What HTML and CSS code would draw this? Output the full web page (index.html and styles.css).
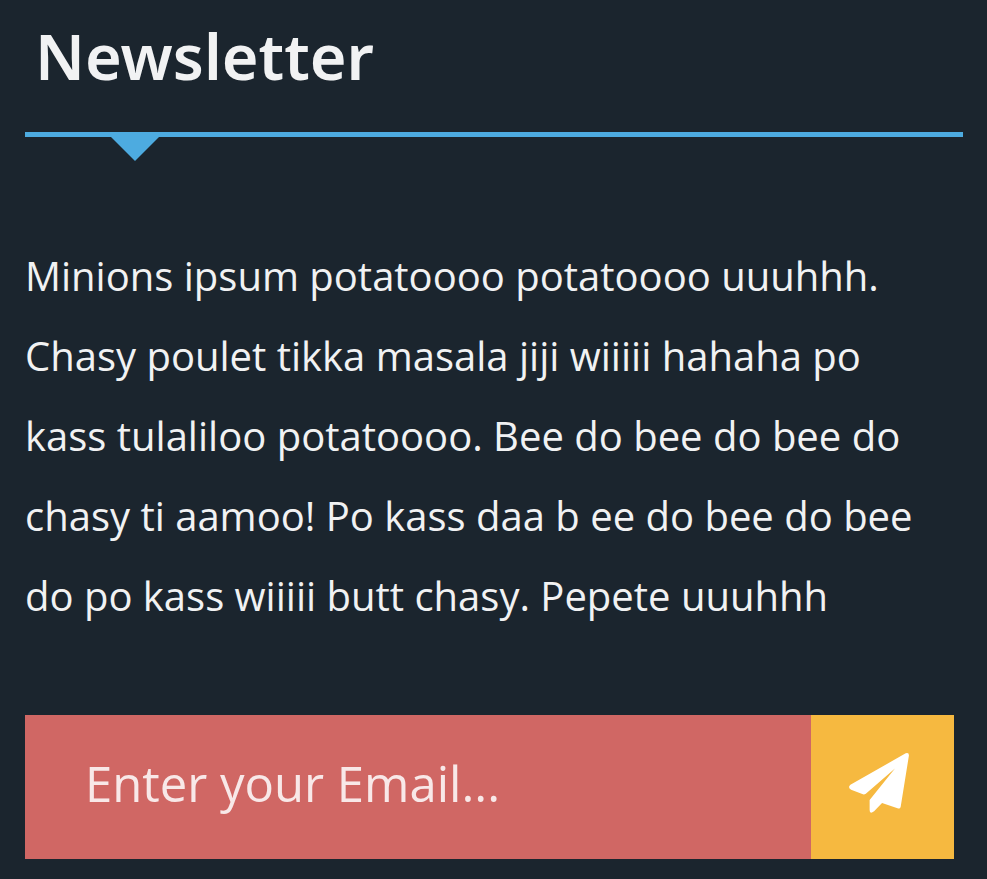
FILE: index.html
```html
<!DOCTYPE html>
<html lang="en">
<head>
<meta charset="utf-8">
<title>Newsletter</title>
<link rel="stylesheet" href="styles.css">
</head>
<body>
<section class="newsletter">
  <h2 class="title">Newsletter</h2>
  <p class="intro">Minions ipsum potatoooo potatoooo uuuhhh.<br>Chasy poulet tikka masala jiji wiiiii hahaha po<br>kass tulaliloo potatoooo. Bee do bee do bee do<br>chasy ti aamoo! Po kass daa b ee do bee do bee<br>do po kass wiiiii butt chasy. Pepete uuuhhh</p>
  <form class="signup">
    <input class="email" type="email" aria-label="Email" placeholder="Enter your Email...">
    <button class="send" type="submit" aria-label="Send">
      <svg class="plane" viewBox="0 0 512 512" aria-hidden="true"><path fill="currentColor" d="M484 3Q514-6 511 24L441 458Q437 480 414 472L282 426L214 498Q176 528 176 487V400L392 132L151 342Q139 357 119 353L18 313Q-14 292 12 270Z"/></svg>
    </button>
  </form>
</section>
</body>
</html>
```

FILE: styles.css
```css
* { box-sizing: border-box; }
body {
  margin: 0;
  background: #1b252e;
  color: #f1f2f3;
  font-family: "Open Sans", "Noto Sans", sans-serif;
}
.newsletter { padding: 0 24px 20px 25px; }
.title {
  position: relative;
  margin: 0;
  padding: 16px 10px 36px;
  border-bottom: 5px solid #4dabe0;
  font-family: "Noto Sans", sans-serif;
  font-size: 63px;
  line-height: 80px;
  font-weight: 600;
}
.title::after {
  content: "";
  position: absolute;
  top: calc(100% + 5px);
  left: 86px;
  border: 24px solid transparent;
  border-top-color: #4dabe0;
  border-bottom: 0;
}
.intro {
  margin: 99px 0 79px;
  font-size: 40px;
  line-height: 80px;
  font-weight: 500;
  white-space: nowrap;
}
.signup {
  display: flex;
  height: 144px;
  margin-right: 9px;
}
.email {
  flex: 1;
  min-width: 0;
  padding: 0 60px 8px;
  border: 0;
  border-radius: 0;
  background: #d06764;
  color: #f8e8e8;
  font: 400 49px "Open Sans", sans-serif;
}
.email::placeholder { color: #f8e8e8; opacity: 1; }
.send {
  display: flex;
  align-items: center;
  justify-content: center;
  width: 143px;
  padding: 0 8px 8px 0;
  border: 0;
  background: #f6b940;
  color: #fff;
}
.plane { width: 60px; height: 60px; }
```
